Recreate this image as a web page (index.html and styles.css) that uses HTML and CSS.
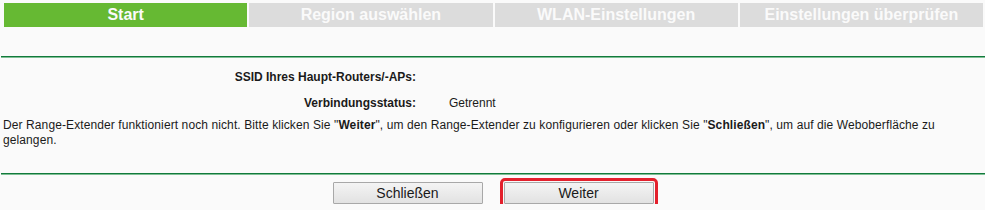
FILE: index.html
```html
<!DOCTYPE html>
<html lang="de">
<head>
<meta charset="utf-8">
<title>Schnelleinrichtung</title>
<link rel="stylesheet" href="styles.css">
</head>
<body>
<div class="steps">
  <div class="step active">Start</div>
  <div class="step">Region auswählen</div>
  <div class="step">WLAN-Einstellungen</div>
  <div class="step">Einstellungen überprüfen</div>
</div>
<div class="rule top-rule"></div>
<div class="info">
  <div class="label">SSID Ihres Haupt-Routers/-APs:</div>
  <div class="value"></div>
  <div class="label">Verbindungsstatus:</div>
  <div class="value">Getrennt</div>
</div>
<p class="note">Der Range-Extender funktioniert noch nicht. Bitte klicken Sie "<b>Weiter</b>", um den Range-Extender zu konfigurieren oder klicken Sie "<b>Schließen</b>", um auf die Weboberfläche zu gelangen.</p>
<div class="rule bottom-rule"></div>
<div class="actions">
  <button class="btn" type="button">Schließen</button>
  <button class="btn btn-focus" type="button">Weiter</button>
</div>
</body>
</html>
```
FILE: styles.css
```css
html, body {
  margin: 0;
  padding: 0;
  background: #fafafa;
  font-family: "Liberation Sans", Arial, sans-serif;
  font-size: 12px;
  color: #1a1a1a;
}
.steps {
  display: flex;
  gap: 2px;
  padding: 3px 2px 0 4px;
}
.step {
  flex: 1;
  height: 24px;
  line-height: 24px;
  text-align: center;
  font-size: 16px;
  font-weight: bold;
  color: #fafafa;
  background: #dcdcdc;
}
.step.active {
  background: #66b933;
}
.rule {
  height: 2px;
  margin-left: 1px;
  background: linear-gradient(#127a3c 0, #127a3c 1px, #7fbf95 1px, #7fbf95 2px);
}
.top-rule {
  margin-top: 29px;
}
.info {
  display: grid;
  grid-template-columns: 416px 1fr;
  column-gap: 33px;
  grid-auto-rows: 26px;
  align-items: center;
  margin-top: 6px;
}
.label {
  text-align: right;
  font-weight: bold;
}
.note {
  margin: 2px 0 0;
  padding: 0 2px 0 3px;
  line-height: 15px;
  letter-spacing: 0.1px;
}
.bottom-rule {
  margin-top: 25px;
}
.actions {
  display: flex;
  justify-content: center;
  gap: 21px;
  padding-top: 7px;
  padding-left: 1px;
}
.btn {
  width: 150px;
  height: 22px;
  padding: 0;
  font-family: "Liberation Sans", Arial, sans-serif;
  font-size: 14px;
  color: #1a1a1a;
  background: linear-gradient(#f4f4f4, #e2e2e2);
  border: 1px solid #a8a8a8;
  border-radius: 1px;
}
.btn-focus {
  outline: 3px solid #e3202c;
  outline-offset: 1px;
}
```
